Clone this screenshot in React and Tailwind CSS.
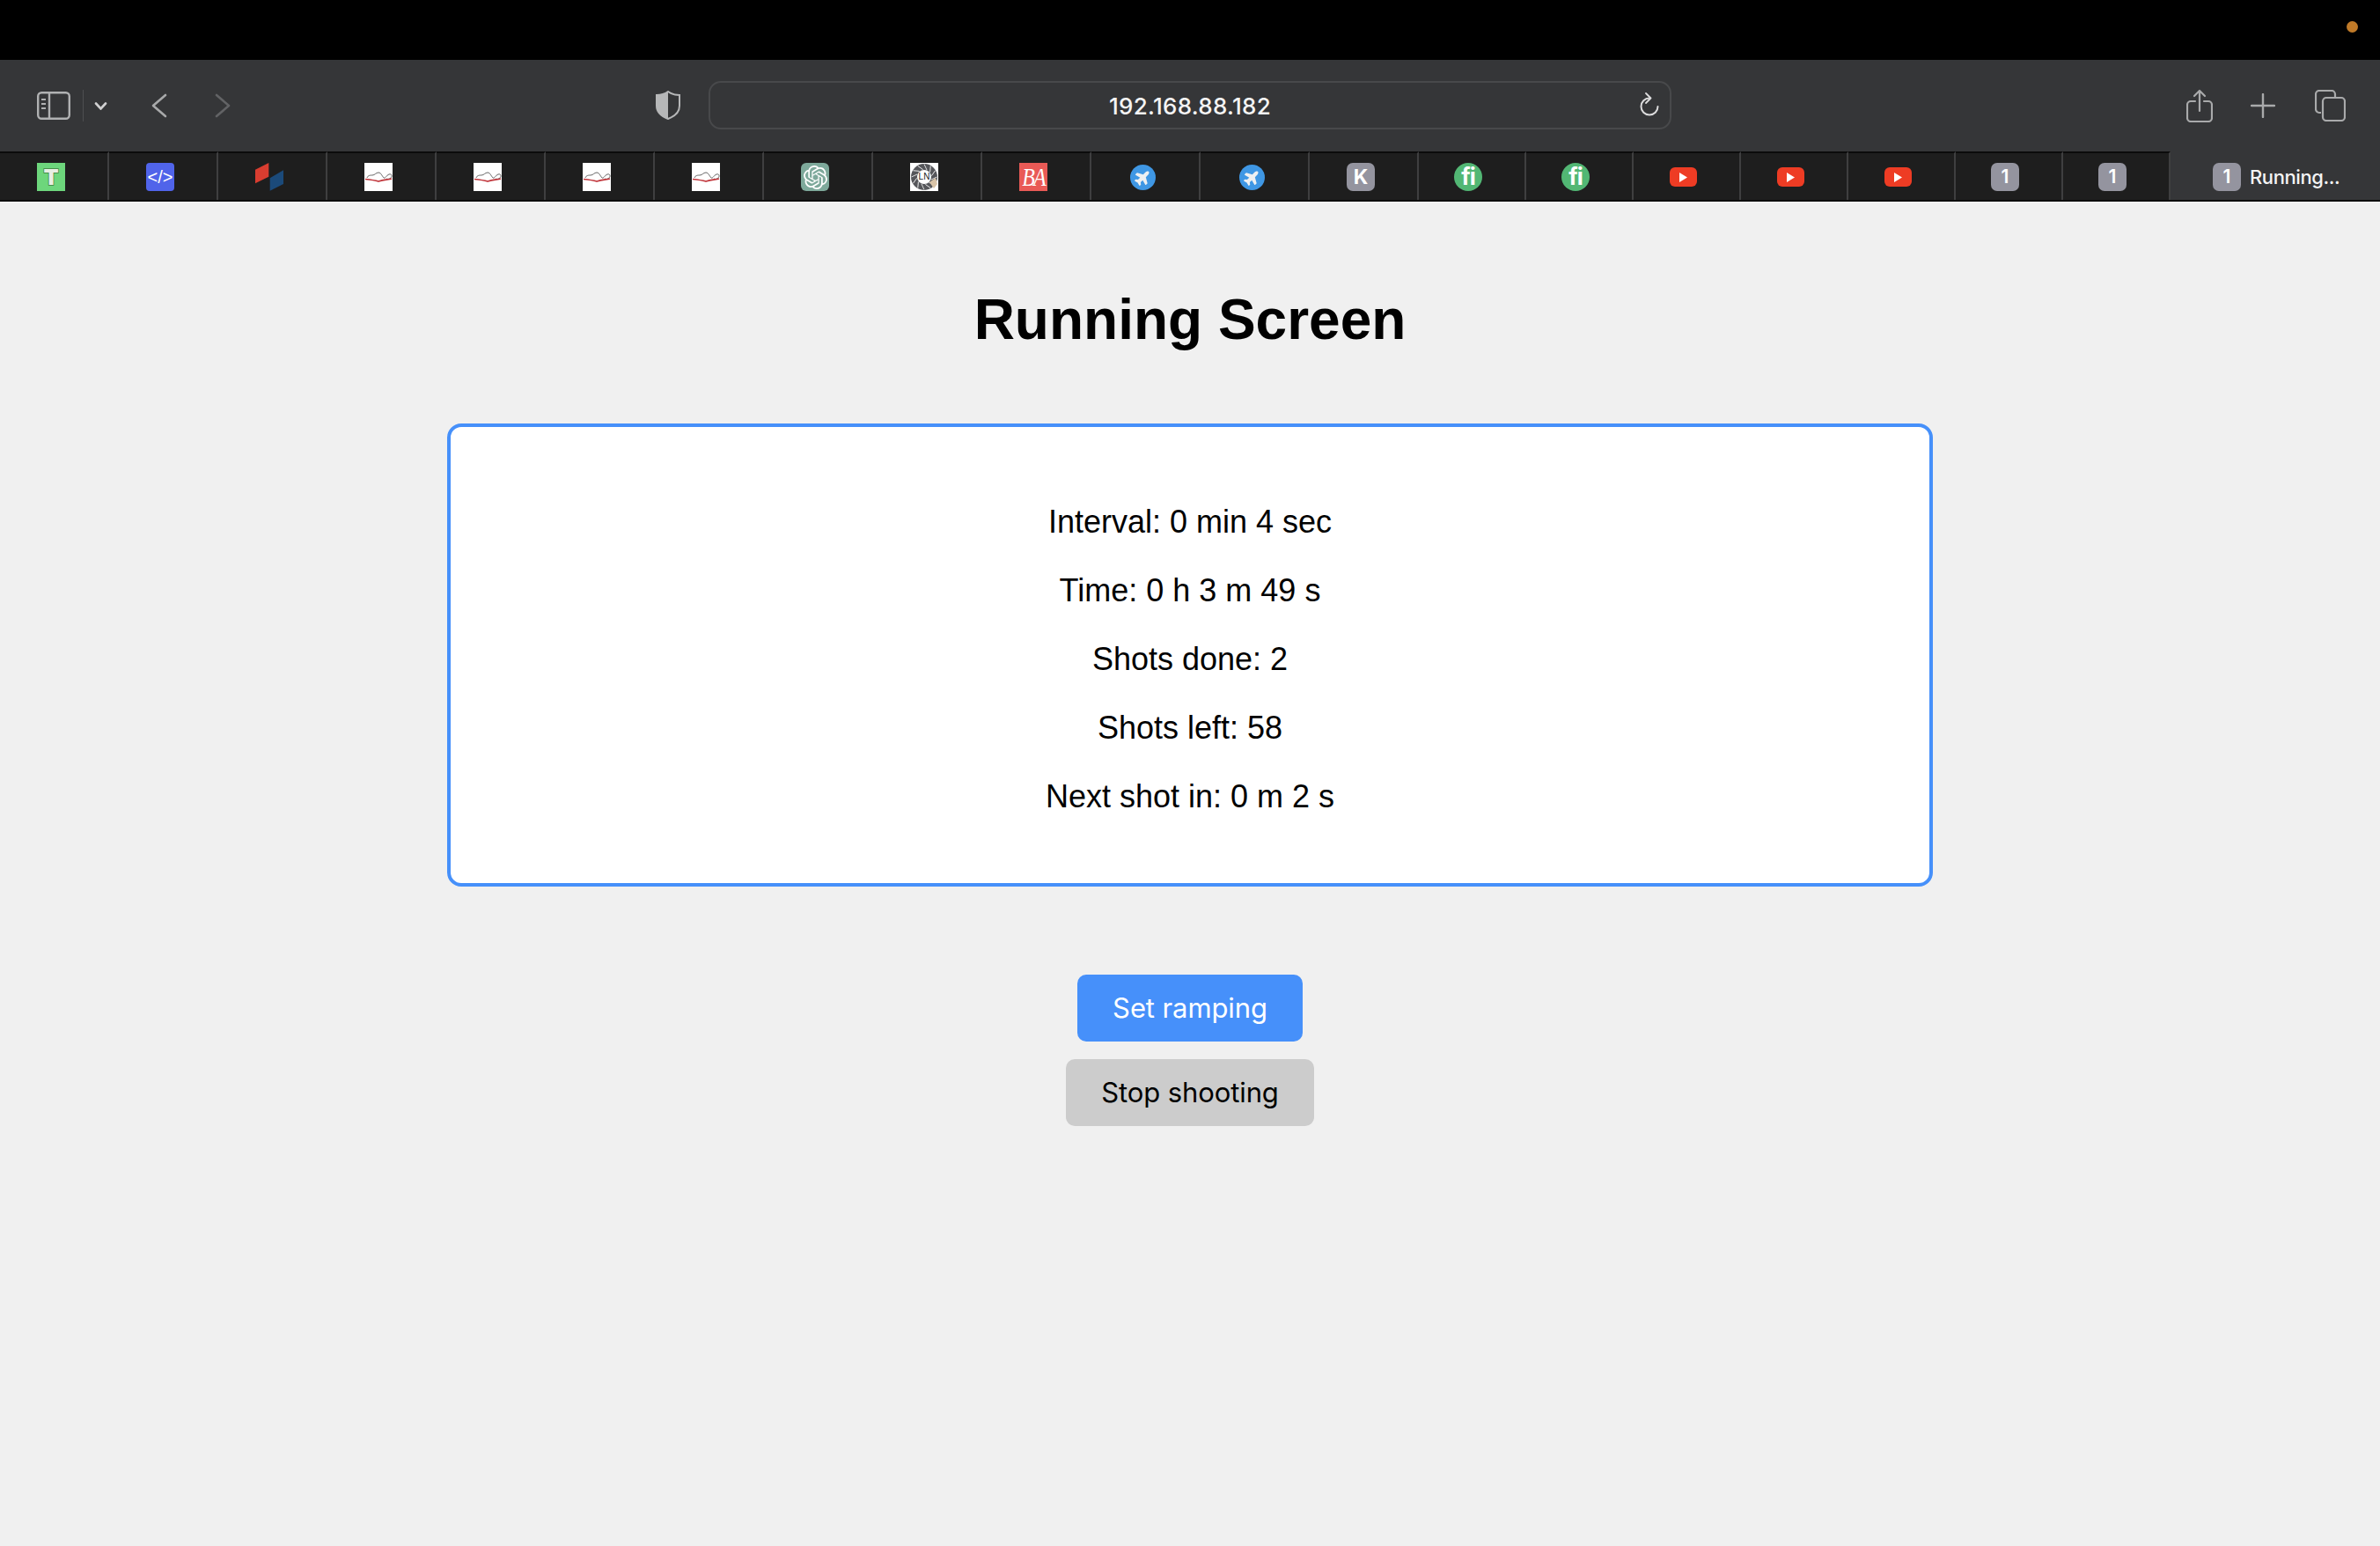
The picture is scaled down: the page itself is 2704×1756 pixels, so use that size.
import { SiOpenai } from "react-icons/si";
import { FaPlane } from "react-icons/fa";

function BookIcon() {
  return (
    <span className="block h-8 w-8 bg-white">
      <svg width="32" height="32" viewBox="0 0 32 32" fill="none">
        <path d="M3 17c1-3 4-3 6-3 3 0 4-3 7-3 3 0 4 4 6 6 2 1 3-3 6-4 3-1 4 2 2 4-1 1-3 2-5 1" stroke="#555" strokeWidth="0.9" />
        <path d="M1 18.5c5 .5 10 1 15 2.5 5-1.5 10-2 15-3" stroke="#c0343a" strokeWidth="1.7" />
      </svg>
    </span>
  );
}

function NumberIcon() {
  return (
    <span className="flex h-8 w-8 items-center justify-center rounded-[7px] bg-[#94949f] font-['Inter',sans-serif] text-[21px] font-semibold text-white">
      1
    </span>
  );
}

function YoutubeIcon() {
  return (
    <span className="flex h-8 w-8 items-center justify-center">
      <span className="flex h-[22px] w-[31px] items-center justify-center rounded-[6px] bg-[#ee3c24]">
        <svg width="9" height="11" viewBox="0 0 9 11"><path d="M0 0l9 5.5L0 11z" fill="#fff" /></svg>
      </span>
    </span>
  );
}

function PlaneIcon() {
  return (
    <span className="flex h-8 w-8 items-center justify-center">
      <span className="flex h-[29px] w-[29px] items-center justify-center rounded-full bg-[#3f97e4] text-[#eef0f2]">
        <FaPlane className="-rotate-45" size={19} />
      </span>
    </span>
  );
}

function FiverrIcon() {
  return (
    <span className="flex h-8 w-8 items-center justify-center rounded-full bg-[#52b774] font-['Inter',sans-serif] text-[26px] leading-none font-bold tracking-[-1px] text-white">
      fi
    </span>
  );
}

// aperture blades of the LN favicon
const blades = [0, 30, 60, 90, 120, 150, 180, 210, 240, 270, 300, 330];

const tabIcons = [
  <span key="t" className="flex h-8 w-8 items-center justify-center bg-[#6dd67c] font-['Inter',sans-serif] text-[25px] leading-none font-black text-[#e8efe4] [-webkit-text-stroke:1.5px_#3e7f3e] [paint-order:stroke_fill]">T</span>,
  <span key="code" className="flex h-8 w-8 items-center justify-center rounded-[4px] bg-[#5064ea] font-['Liberation_Sans',sans-serif] text-[20px] leading-none text-white">{"</>"}</span>,
  <svg key="blocks" width="32" height="32" viewBox="0 0 32 32">
    <path d="M0 7.7L15.3 0v15.7L0 23.3z" fill="#d93d30" />
    <path d="M16.7 17.3L32 8.3V24l-15.3 7.7z" fill="#1b4a7a" />
  </svg>,
  <BookIcon key="b1" />,
  <BookIcon key="b2" />,
  <BookIcon key="b3" />,
  <BookIcon key="b4" />,
  <span key="ai" className="flex h-8 w-8 items-center justify-center rounded-[6px] bg-[#7ea99b] text-white"><SiOpenai size={27} /></span>,
  <span key="ln" className="relative flex h-8 w-8 items-center justify-center bg-white">
    <svg className="absolute inset-0" width="32" height="32" viewBox="0 0 32 32">
      <circle cx="16" cy="16" r="15" fill="#55565a" />
      {blades.map((a) => (
        <path key={a} d="M16 1.5L19 8" stroke="#fff" strokeWidth="0.8" transform={`rotate(${a} 16 16)`} />
      ))}
      <circle cx="16" cy="16" r="8" fill="#fff" />
      <path d="M22 22l7-5 2 7-4 5z" fill="#d9c4a8" />
    </svg>
    <span className="relative font-['Liberation_Sans',sans-serif] text-[10px] leading-none text-[#222]">LN</span>
  </span>,
  <span key="ba" className="flex h-8 w-8 items-center justify-center bg-[#e95a56] font-['Liberation_Serif',serif] text-white italic">
    <span className="scale-y-125 text-[24px] leading-none tracking-[-2px]">BA</span>
  </span>,
  <PlaneIcon key="p1" />,
  <PlaneIcon key="p2" />,
  <span key="k" className="flex h-8 w-8 items-center justify-center rounded-[7px] bg-[#94949f] font-['Inter',sans-serif] text-[23px] font-bold text-white">K</span>,
  <FiverrIcon key="f1" />,
  <FiverrIcon key="f2" />,
  <YoutubeIcon key="y1" />,
  <YoutubeIcon key="y2" />,
  <YoutubeIcon key="y3" />,
  <NumberIcon key="n1" />,
  <NumberIcon key="n2" />,
];

const stats = [
  "Interval: 0 min 4 sec",
  "Time: 0 h 3 m 49 s",
  "Shots done: 2",
  "Shots left: 58",
  "Next shot in: 0 m 2 s",
];

function Toolbar() {
  return (
    <div className="flex h-[104px] items-center bg-[#353638] pl-[42px]">
      {/* sidebar toggle */}
      <svg width="38" height="32" viewBox="0 0 38 32" fill="none" stroke="#b0b1b2" strokeWidth="2.4">
        <rect x="1.2" y="1.2" width="35.6" height="29.6" rx="4" />
        <path d="M14 1v30" />
        <path d="M5 9h5M5 14h5M5 19h5" strokeWidth="2" />
      </svg>
      <span className="ml-[14px] h-[36px] w-px bg-[#4d4e50]" />
      <svg className="ml-[12px]" width="15" height="9" viewBox="0 0 15 9" fill="none" stroke="#d0d0d1" strokeWidth="2.6" strokeLinecap="round">
        <path d="M2 1.5l5.5 6 5.5-6" />
      </svg>
      <svg className="ml-[50px] -mt-[1px]" width="18" height="28" viewBox="0 0 18 28" fill="none" stroke="#a8a9aa" strokeWidth="2.6" strokeLinecap="round" strokeLinejoin="round">
        <path d="M16 2L2 14l14 12" />
      </svg>
      <svg className="ml-[54px] -mt-[1px]" width="18" height="28" viewBox="0 0 18 28" fill="none" stroke="#626365" strokeWidth="2.6" strokeLinecap="round" strokeLinejoin="round">
        <path d="M2 2l14 12L2 26" />
      </svg>
      <svg className="ml-[483px] -mt-[1px]" width="28" height="33" viewBox="0 0 28 33">
        <path d="M14 1c4 3 8 4 13 4v12c0 7-5 12-13 15C6 29 1 24 1 17V5c5 0 9-1 13-4z" fill="none" stroke="#b6b7b8" strokeWidth="2" />
        <path d="M14 1C10 4 6 5 1 5v12c0 7 5 12 13 15z" fill="#b6b7b8" />
      </svg>
      {/* address bar */}
      <div className="relative ml-[32px] -mt-[1px] flex h-[55px] w-[1094px] items-center justify-center rounded-[14px] border-2 border-[#48494b]">
        <span className="pt-[2px] font-['Inter',sans-serif] text-[26px] font-medium tracking-[0.3px] text-[#f4f4f4]">192.168.88.182</span>
        <svg className="absolute right-[12px] top-[11px]" width="23" height="28" viewBox="0 0 23 28" fill="none" stroke="#dcdcdd" strokeWidth="2" strokeLinecap="round" strokeLinejoin="round">
          <path d="M12 6.5a9.5 9.5 0 1 0 9.5 9.5" />
          <path d="M8 1l5.5 5.5L8 12" strokeWidth="1.8" />
        </svg>
      </div>
      {/* right actions */}
      <svg className="ml-[585px] -mt-[1px]" width="30" height="38" viewBox="0 0 30 38" fill="none" stroke="#a9aaab" strokeWidth="2.2" strokeLinecap="round" strokeLinejoin="round">
        <path d="M10 14H5a4 4 0 0 0-4 4v15a4 4 0 0 0 4 4h20a4 4 0 0 0 4-4V18a4 4 0 0 0-4-4h-5" />
        <path d="M15 25V2M9 8l6-6 6 6" />
      </svg>
      <svg className="ml-[43px] -mt-[1px]" width="28" height="28" viewBox="0 0 28 28" fill="none" stroke="#a9aaab" strokeWidth="2.4" strokeLinecap="round">
        <path d="M14 1v26M1 14h26" />
      </svg>
      <svg className="ml-[45px] -mt-[1px]" width="35" height="36" viewBox="0 0 35 36" fill="none" stroke="#a9aaab" strokeWidth="2.2">
        <path d="M7 26H5a4 4 0 0 1-4-4V5a4 4 0 0 1 4-4h14a4 4 0 0 1 4 4v3" />
        <rect x="9" y="9" width="25" height="26" rx="4" />
      </svg>
    </div>
  );
}

function TabBar() {
  return (
    <div className="flex h-[57px] border-b-2 border-[#0b0b0b]">
      {tabIcons.map((icon, i) => (
        <div
          key={i}
          className={`flex items-center border-t-2 border-r-2 border-t-[#0b0b0b] border-r-[#3f3f40] bg-[#1e1e1e] pt-[1px] ${i < 13 ? "w-[124px] pl-[42px]" : "w-[122px] pl-[40px]"}`}
        >
          {icon}
        </div>
      ))}
      <div className="flex flex-1 items-center bg-[#353638] pt-[3px] pl-[48px]">
        <NumberIcon />
        <span className="ml-[10px] font-['Inter',sans-serif] text-[22px] font-medium tracking-[-0.4px] text-[#f4f4f4]">Running...</span>
      </div>
    </div>
  );
}

export default function App() {
  return (
    <div className="flex min-h-[1756px] flex-col bg-[#f0f0f0] font-['Liberation_Sans',sans-serif]">
      <div className="flex h-[68px] items-center justify-end bg-black pr-[25px]">
        <span className="mb-[8px] h-[13px] w-[13px] rounded-full bg-[#c07a28]" />
      </div>
      <Toolbar />
      <TabBar />

      <main className="flex flex-col items-center pt-[97px]">
        <h1 className="text-[64px] leading-[74px] font-bold text-black">Running Screen</h1>

        <div className="mt-[81px] flex h-[526px] w-[1688px] flex-col items-center justify-center gap-[36px] rounded-[16px] border-4 border-[#4690fa] bg-white pt-[10px]">
          {stats.map((line) => (
            <p key={line} className="text-[36px] leading-[42px] text-black">{line}</p>
          ))}
        </div>

        <div className="mt-[100px] flex flex-col items-center gap-[20px] font-['Inter',sans-serif] text-[31px] tracking-[-0.1px]">
          <button className="h-[76px] w-[256px] rounded-[10px] bg-[#4690fa] text-white">Set ramping</button>
          <button className="h-[76px] w-[282px] rounded-[10px] bg-[#cccccc] text-black">Stop shooting</button>
        </div>
      </main>
    </div>
  );
}
